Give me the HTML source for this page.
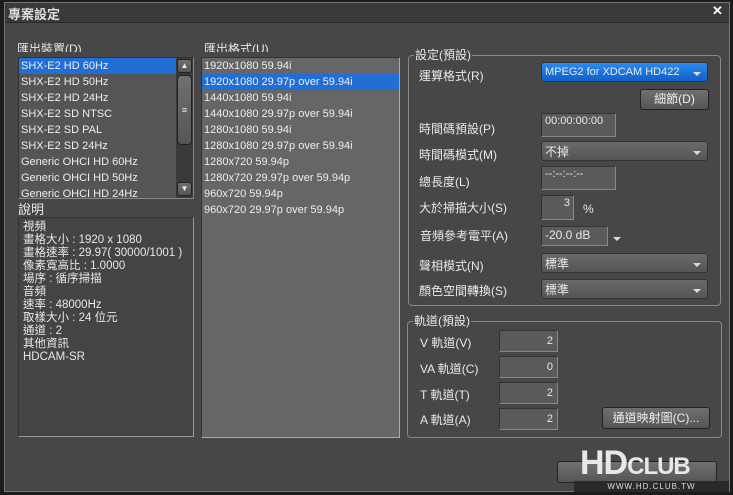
<!DOCTYPE html>
<html><head><meta charset="utf-8"><style>
*{margin:0;padding:0;box-sizing:border-box}
body{width:733px;height:495px;background:#1c1c1c;font-family:"Liberation Sans","Noto Sans CJK TC",sans-serif;font-size:11px;color:#e8e8e8;position:relative;overflow:hidden}
.abs{position:absolute}
.win{left:4px;top:2px;width:726px;height:490px;background:#474747;border:1px solid #777}
.title{left:5px;top:3px;width:724px;height:20px;background:#3a3a3a;border-bottom:1px solid #2a2a2a;font-size:13px;font-weight:bold;color:#ddd;padding:1px 0 0 3px}
.list{background:#666;border:1px solid #888;border-top-color:#333;border-left-color:#333}
.row{height:16px;line-height:16px;padding-left:2px;white-space:nowrap;color:#eee}
.sel{background:#1f6fd6}
.grp{border:1px solid #888;border-radius:4px}
.leg{background:#474747;padding:0 1px;font-size:12px}
.lbl{font-size:12px}
.box{background:#5a5a5a;border:1px solid #888;border-top-color:#333;border-left-color:#333;font-size:11px;padding:1px 3px}
.dd{background:linear-gradient(#6a6a6a,#555);border:1px solid #333;border-radius:3px;font-size:12px;padding:1px 3px;height:20px}
.dd:after{content:"";position:absolute;right:6px;top:9px;border:4px solid transparent;border-top:4px solid #ddd}
.btn{background:linear-gradient(#707070,#555);border:1px solid #222;border-radius:3px;text-align:center;font-size:12px;line-height:18px;color:#eee}
.num{text-align:right;padding-right:4px;line-height:18px}
</style></head><body>
<div class="abs win"></div>
<div class="abs title">專案設定</div>
<div class="abs" style="left:712px;top:3px;font-size:13px;font-weight:bold;color:#fff">✕</div>

<div class="abs lbl" style="left:17px;top:39px;height:13px;overflow:hidden;line-height:20px">匯出裝置(D)</div>
<div class="abs lbl" style="left:204px;top:39px;height:13px;overflow:hidden;line-height:20px">匯出格式(U)</div>

<div class="abs list" style="left:18px;top:57px;width:176px;height:142px;background:#555;overflow:hidden">
<div class="row sel" style="width:157px">SHX-E2 HD 60Hz</div>
<div class="row">SHX-E2 HD 50Hz</div><div class="row">SHX-E2 HD 24Hz</div><div class="row">SHX-E2 SD NTSC</div><div class="row">SHX-E2 SD PAL</div><div class="row">SHX-E2 SD 24Hz</div><div class="row">Generic OHCI HD 60Hz</div><div class="row">Generic OHCI HD 50Hz</div><div class="row">Generic OHCI HD 24Hz</div>
<div class="abs" style="left:157px;top:0;width:17px;height:140px;background:#3a3a3a"></div>
<div class="abs btn" style="left:158px;top:1px;width:15px;height:14px;line-height:12px;font-size:8px">▲</div>
<div class="abs btn" style="left:158px;top:17px;width:15px;height:70px;border-radius:4px;line-height:68px;font-size:9px">≡</div>
<div class="abs btn" style="left:158px;top:124px;width:15px;height:14px;line-height:12px;font-size:8px">▼</div>
</div>

<div class="abs lbl" style="left:18px;top:199px;font-size:13px">說明</div>
<div class="abs" style="left:18px;top:217px;width:176px;height:220px;background:#444;border:1px solid #999;border-top-color:#333;border-left-color:#333;padding:3px 0 0 4px;font-size:11.5px;line-height:13px">
視頻<br>畫格大小 : 1920 x 1080<br>畫格速率 : 29.97( 30000/1001 )<br>像素寬高比 : 1.0000<br>場序 : 循序掃描<br>音頻<br>速率 : 48000Hz<br>取樣大小 : 24 位元<br>通道 : 2<br>其他資訊<br>HDCAM-SR</div>

<div class="abs list" style="left:201px;top:57px;width:199px;height:381px;border-bottom-color:#aaa;border-right-color:#aaa">
<div class="row">1920x1080 59.94i</div><div class="row sel">1920x1080 29.97p over 59.94i</div><div class="row">1440x1080 59.94i</div><div class="row">1440x1080 29.97p over 59.94i</div><div class="row">1280x1080 59.94i</div><div class="row">1280x1080 29.97p over 59.94i</div><div class="row">1280x720 59.94p</div><div class="row">1280x720 29.97p over 59.94p</div><div class="row">960x720 59.94p</div><div class="row">960x720 29.97p over 59.94p</div>
</div>

<div class="abs grp" style="left:408px;top:55px;width:313px;height:251px"></div>
<div class="abs leg" style="left:414px;top:46px">設定(預設)</div>
<div class="abs lbl" style="left:419px;top:67px">運算格式(R)</div>
<div class="abs dd" style="left:541px;top:62px;width:167px;background:linear-gradient(#2b8af0,#1060c8);font-size:11px;line-height:16px">MPEG2 for XDCAM HD422</div>
<div class="abs btn" style="left:640px;top:89px;width:69px;height:21px">細節(D)</div>
<div class="abs lbl" style="left:419px;top:120px">時間碼預設(P)</div>
<div class="abs box" style="left:541px;top:113px;width:75px;height:24px">00:00:00:00</div>
<div class="abs lbl" style="left:419px;top:146px">時間碼模式(M)</div>
<div class="abs dd" style="left:541px;top:141px;width:167px">不掉</div>
<div class="abs lbl" style="left:419px;top:173px">總長度(L)</div>
<div class="abs box" style="left:541px;top:166px;width:75px;height:24px">--:--:--:--</div>
<div class="abs lbl" style="left:419px;top:199px">大於掃描大小(S)</div>
<div class="abs box" style="left:541px;top:195px;width:33px;height:25px;text-align:right">3</div>
<div class="abs lbl" style="left:583px;top:202px">%</div>
<div class="abs lbl" style="left:420px;top:227px">音頻參考電平(A)</div>
<div class="abs box" style="left:541px;top:226px;width:67px;height:20px;font-size:12px">-20.0 dB</div>
<div class="abs" style="left:613px;top:237px;border:4px solid transparent;border-top:4px solid #ddd"></div>
<div class="abs lbl" style="left:419px;top:257px">聲相模式(N)</div>
<div class="abs dd" style="left:541px;top:253px;width:167px">標準</div>
<div class="abs lbl" style="left:419px;top:282px">顏色空間轉換(S)</div>
<div class="abs dd" style="left:541px;top:279px;width:167px">標準</div>

<div class="abs grp" style="left:407px;top:321px;width:315px;height:117px"></div>
<div class="abs leg" style="left:413px;top:312px">軌道(預設)</div>
<div class="abs lbl" style="left:420px;top:334px">V 軌道(V)</div>
<div class="abs box num" style="left:499px;top:330px;width:59px;height:22px">2</div>
<div class="abs lbl" style="left:420px;top:360px">VA 軌道(C)</div>
<div class="abs box num" style="left:499px;top:356px;width:59px;height:22px">0</div>
<div class="abs lbl" style="left:420px;top:386px">T 軌道(T)</div>
<div class="abs box num" style="left:499px;top:382px;width:59px;height:22px">2</div>
<div class="abs lbl" style="left:420px;top:411px">A 軌道(A)</div>
<div class="abs box num" style="left:499px;top:408px;width:59px;height:22px">2</div>
<div class="abs btn" style="left:602px;top:407px;width:108px;height:22px;line-height:20px">通道映射圖(C)...</div>

<div class="abs btn" style="left:557px;top:461px;width:160px;height:22px"></div>
<div class="abs" style="left:580px;top:448px;font-size:34px;font-weight:bold;color:#e8e8e8;letter-spacing:-1px;font-family:'Liberation Sans',sans-serif;line-height:30px">HD<span style="font-size:24px">CLUB</span></div>
<div class="abs" style="left:574px;top:481px;width:155px;height:11px;background:#2a2a2a;color:#ddd;font-size:8px;text-align:center;letter-spacing:1px;line-height:11px">WWW.HD.CLUB.TW</div>
</body></html>
